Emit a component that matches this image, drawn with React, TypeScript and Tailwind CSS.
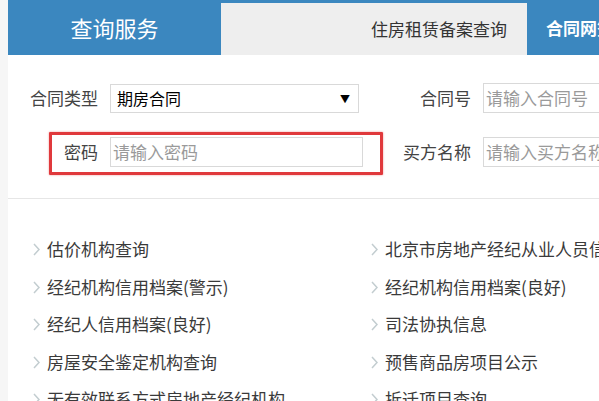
import type { ReactNode } from "react";

const FONT = { fontFamily: '"Microsoft YaHei", "Noto Sans CJK SC", "Noto Sans", sans-serif' };

const LEFT_LINKS = [
  "估价机构查询",
  "经纪机构信用档案(警示)",
  "经纪人信用档案(良好)",
  "房屋安全鉴定机构查询",
  "无有效联系方式房地产经纪机构",
];

const RIGHT_LINKS = [
  "北京市房地产经纪从业人员信息查询",
  "经纪机构信用档案(良好)",
  "司法协执信息",
  "预售商品房项目公示",
  "拆迁项目查询",
];

function Chevron() {
  return (
    <svg width="7" height="13" viewBox="0 0 7 13" className="mt-[2px] shrink-0">
      <polyline points="1,1 6,6.5 1,12" fill="none" stroke="#c3cdd0" strokeWidth="1.5" />
    </svg>
  );
}

function LinkItem({ children }: { children: ReactNode }) {
  return (
    <div className="flex h-[37.5px] items-center gap-[7px] whitespace-nowrap text-[17px] text-[#3a3a3a]">
      <Chevron />
      <span>{children}</span>
    </div>
  );
}

function Field({ label, labelWidth, placeholder }: { label: string; labelWidth: string; placeholder: string }) {
  return (
    <div className="flex items-center">
      <span className={`${labelWidth} shrink-0 text-right text-[17px] text-[#444]`}>{label}</span>
      <div className="ml-3 flex h-[30px] w-[253px] shrink-0 items-center whitespace-nowrap border border-[#d9d9d9] px-[2px] text-[17px] text-[#9a9a9a]">
        {placeholder}
      </div>
    </div>
  );
}

export default function App() {
  return (
    <div className="flex h-[401px] w-[599px] overflow-hidden bg-[#f6f6f6]" style={FONT}>
      <div className="w-2 shrink-0" />
      <div className="flex min-w-0 flex-1 flex-col bg-white">
        {/* tabs */}
        <div className="flex h-[55px] shrink-0 bg-[#3b87bf]">
          <div className="flex w-[213px] shrink-0 items-center justify-center text-[22px] text-white">查询服务</div>
          <div className="mt-[3px] flex w-[306px] shrink-0 items-center justify-end bg-[#eeeeee] pr-5 text-[17px] text-[#333]">
            住房租赁备案查询
          </div>
          <div className="flex shrink-0 items-center whitespace-nowrap pl-[19px] text-[17px] font-bold text-white">
            合同网签查询
          </div>
        </div>

        {/* form */}
        <div className="flex flex-col gap-[24px] pt-[28px]">
          <div className="flex items-center">
            <span className="w-[90px] shrink-0 text-right text-[17px] text-[#444]">合同类型</span>
            <div className="ml-3 flex h-[29px] w-[249px] shrink-0 items-center justify-between border border-[#d9d9d9] pl-[6px] pr-[8px] text-[16px] text-black">
              <span>期房合同</span>
              <span className="text-[10px]">▼</span>
            </div>
            <Field label="合同号" labelWidth="w-[112px]" placeholder="请输入合同号" />
          </div>
          <div className="relative flex items-center">
            <div className="pointer-events-none absolute left-[41px] top-[-5px] h-[43px] w-[334px] rounded-[1px] border-[3px] border-[#e0393c] shadow-[0_0_2px_rgba(224,57,60,0.6)]" />
            <Field label="密码" labelWidth="w-[90px]" placeholder="请输入密码" />
            <Field label="买方名称" labelWidth="w-[108px]" placeholder="请输入买方名称" />
          </div>
        </div>

        <div className="mt-[31px] h-px shrink-0 bg-[#e6e6e6]" />

        {/* links */}
        <div className="flex pl-[25px] pt-[31px]">
          <div className="w-[338px] shrink-0">
            {LEFT_LINKS.map((t) => (
              <LinkItem key={t}>{t}</LinkItem>
            ))}
          </div>
          <div className="shrink-0">
            {RIGHT_LINKS.map((t) => (
              <LinkItem key={t}>{t}</LinkItem>
            ))}
          </div>
        </div>
      </div>
    </div>
  );
}
